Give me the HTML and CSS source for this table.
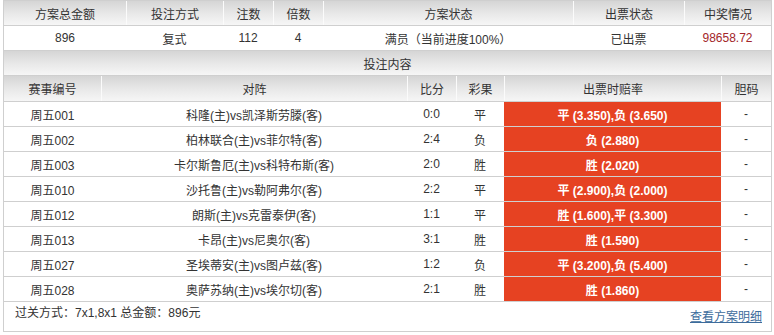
FILE: index.html
```html
<!DOCTYPE html>
<html lang="zh-CN">
<head>
<meta charset="utf-8">
<title>方案详情</title>
<link rel="stylesheet" href="styles.css">
</head>
<body>
<div class="wrap">
  <div class="row head sum">
    <div class="c">方案总金额</div>
    <div class="c">投注方式</div>
    <div class="c">注数</div>
    <div class="c">倍数</div>
    <div class="c">方案状态</div>
    <div class="c">出票状态</div>
    <div class="c">中奖情况</div>
  </div>
  <div class="row data sum">
    <div class="c">896</div>
    <div class="c">复式</div>
    <div class="c">112</div>
    <div class="c">4</div>
    <div class="c">满员（当前进度100%）</div>
    <div class="c">已出票</div>
    <div class="c prize">98658.72</div>
  </div>
  <div class="row head section">投注内容</div>
  <div class="row head bet head2">
    <div class="c">赛事编号</div>
    <div class="c">对阵</div>
    <div class="c">比分</div>
    <div class="c">彩果</div>
    <div class="c">出票时赔率</div>
    <div class="c">胆码</div>
  </div>
  <div class="row data bet">
    <div class="c">周五001</div><div class="c">科隆(主)vs凯泽斯劳滕(客)</div><div class="c">0:0</div><div class="c">平</div><div class="c odds">平 (3.350),负 (3.650)</div><div class="c">-</div>
  </div>
  <div class="row data bet">
    <div class="c">周五002</div><div class="c">柏林联合(主)vs菲尔特(客)</div><div class="c">2:4</div><div class="c">负</div><div class="c odds">负 (2.880)</div><div class="c">-</div>
  </div>
  <div class="row data bet">
    <div class="c">周五003</div><div class="c">卡尔斯鲁厄(主)vs科特布斯(客)</div><div class="c">2:0</div><div class="c">胜</div><div class="c odds">胜 (2.020)</div><div class="c">-</div>
  </div>
  <div class="row data bet">
    <div class="c">周五010</div><div class="c">沙托鲁(主)vs勒阿弗尔(客)</div><div class="c">2:2</div><div class="c">平</div><div class="c odds">平 (2.900),负 (2.000)</div><div class="c">-</div>
  </div>
  <div class="row data bet">
    <div class="c">周五012</div><div class="c">朗斯(主)vs克雷泰伊(客)</div><div class="c">1:1</div><div class="c">平</div><div class="c odds">胜 (1.600),平 (3.300)</div><div class="c">-</div>
  </div>
  <div class="row data bet">
    <div class="c">周五013</div><div class="c">卡昂(主)vs尼奥尔(客)</div><div class="c">3:1</div><div class="c">胜</div><div class="c odds">胜 (1.590)</div><div class="c">-</div>
  </div>
  <div class="row data bet">
    <div class="c">周五027</div><div class="c">圣埃蒂安(主)vs图卢兹(客)</div><div class="c">1:2</div><div class="c">负</div><div class="c odds">平 (3.200),负 (5.400)</div><div class="c">-</div>
  </div>
  <div class="row data bet">
    <div class="c">周五028</div><div class="c">奥萨苏纳(主)vs埃尔切(客)</div><div class="c">2:1</div><div class="c">胜</div><div class="c odds">胜 (1.860)</div><div class="c">-</div>
  </div>
  <div class="foot">
    <span class="pass">过关方式：7x1,8x1 总金额：896元</span>
    <a class="more" href="#">查看方案明细</a>
  </div>
</div>
</body>
</html>
```

FILE: styles.css
```css
html, body {
  margin: 0;
  padding: 0;
  background: #fff;
}
body {
  font-family: "Liberation Sans", Tahoma, "Noto Sans CJK SC", sans-serif;
  font-size: 12px;
  color: #333;
}
.wrap {
  margin-left: 3px;
  width: 767px;
  border: 1px solid #cfcfcf;
}
.row {
  display: grid;
  height: 24px;
  border-bottom: 1px solid #cfcfcf;
}
.row .c {
  display: flex;
  align-items: center;
  justify-content: center;
  white-space: nowrap;
  overflow: hidden;
}
.sum {
  grid-template-columns: 122px 97px 50px 50px 250px 111px 87px;
}
.bet {
  grid-template-columns: 97px 306px 49px 48px 217px 50px;
}
.head {
  background: linear-gradient(to bottom, #d5d5d5 0%, #e9e9e9 55%, #f6f6f6 100%);
  color: #333;
}
.head .c + .c {
  border-left: 1px solid #fbfbfb;
}
.head2 {
  height: 25px;
}
.section {
  display: flex;
  align-items: center;
  justify-content: center;
}
.data {
  background: #fff;
}
.prize {
  color: #a3262a;
}
.odds {
  background: #e64222;
  color: #fff;
  font-weight: bold;
}
.foot {
  height: 29px;
  display: flex;
  justify-content: space-between;
  align-items: flex-start;
  padding: 0 9px 0 11px;
}
.pass {
  padding-top: 4px;
  line-height: 14px;
}
.more {
  padding-top: 8px;
  line-height: 14px;
  color: #3d6c9c;
  text-decoration: underline;
}
```
